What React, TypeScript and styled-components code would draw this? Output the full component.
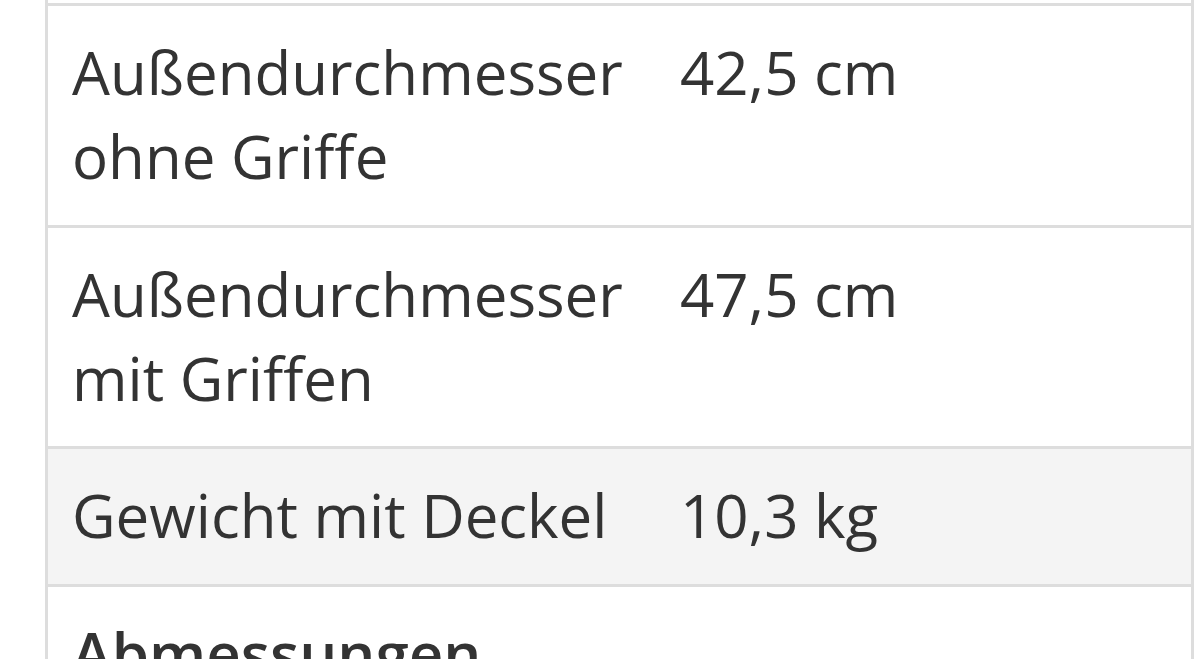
import styled, { createGlobalStyle } from "styled-components";

const GlobalStyle = createGlobalStyle`
  html, body {
    margin: 0;
    padding: 0;
    background: #fff;
    overflow: hidden;
  }
  body {
    font-family: "Open Sans", "Liberation Sans", sans-serif;
    color: #333;
  }
`;

const Page = styled.div`
  height: 659px;
  padding-left: 45px;
  width: 1149px;
`;

const Table = styled.div`
  border-left: 3px solid #dddddd;
  border-right: 3px solid #dddddd;
  padding-top: 3px;
  height: 100%;
`;

const Row = styled.div<{ $shaded?: boolean }>`
  display: grid;
  grid-template-columns: 608px 1fr;
  border-top: 3px solid #dddddd;
  background: ${(p) => (p.$shaded ? "#f4f4f4" : "#fff")};
`;

const Cell = styled.div<{ $bold?: boolean }>`
  padding: 24px 24px 26.5px;
  font-size: 60px;
  line-height: 84px;
  font-weight: ${(p) => (p.$bold ? 600 : 400)};
`;

const rows = [
  { label: ["Außendurchmesser", "ohne Griffe"], value: "42,5 cm" },
  { label: ["Außendurchmesser", "mit Griffen"], value: "47,5 cm" },
  { label: ["Gewicht mit Deckel"], value: "10,3 kg", shaded: true },
];

export default function App() {
  return (
    <>
      <GlobalStyle />
      <Page>
        <Table>
          {rows.map((r) => (
            <Row key={r.value} $shaded={r.shaded}>
              <Cell>
                {r.label.map((l, i) => (
                  <div key={i}>{l}</div>
                ))}
              </Cell>
              <Cell>{r.value}</Cell>
            </Row>
          ))}
          <Row>
            <Cell $bold>Abmessungen</Cell>
            <Cell />
          </Row>
        </Table>
      </Page>
    </>
  );
}
